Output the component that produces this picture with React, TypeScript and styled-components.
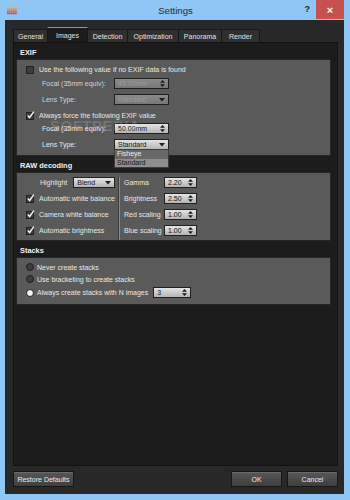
import React from "react";
import styled, { createGlobalStyle } from "styled-components";

const Global = createGlobalStyle`
  html, body { margin: 0; padding: 0; background: #8ec6f5; }
  body { font-family: "Liberation Sans", Arial, sans-serif; }
  * { box-sizing: border-box; }
`;

const Window = styled.div`
  position: relative;
  width: 350px;
  height: 500px;
  background: #8ec6f5;
  display: flex;
  flex-direction: column;
  overflow: hidden;
`;

const TitleBar = styled.div`
  height: 20px;
  display: grid;
  grid-template-columns: 1fr auto 1fr;
  align-items: center;
  padding-left: 7px;
  padding-right: 6px;
`;

const Title = styled.div`
  font-size: 9.6px;
  color: #2a2a2a;
  padding-top: 1px;
`;

const TitleRight = styled.div`
  display: flex;
  justify-content: flex-end;
  align-items: flex-start;
  height: 20px;
  gap: 6px;
`;

const Help = styled.div`
  font-size: 9px;
  font-weight: bold;
  color: #222;
  padding-top: 4px;
`;

const Close = styled.div`
  width: 28px;
  height: 19px;
  background: #c75050;
  color: #fff;
  font-size: 11px;
  font-weight: bold;
  display: flex;
  align-items: center;
  justify-content: center;
`;

const Frame = styled.div`
  flex: 1;
  margin: 0 6px 6px 5px;
  background: #282828;
  padding: 7px 6px 7px 8px;
  display: flex;
  flex-direction: column;
`;

const TabBar = styled.div`
  height: 15px;
  display: flex;
  align-items: flex-end;
`;

const Tab = styled.div<{ $w: number; $active?: boolean }>`
  width: ${(p) => p.$w}px;
  height: ${(p) => (p.$active ? 15 : 13)}px;
  background: ${(p) => (p.$active ? "#1c1c1c" : "#2f2f2f")};
  border: 1px solid #161616;
  border-bottom: none;
  border-top: 1px solid ${(p) => (p.$active ? "#c8921e" : "#1a1a1a")};
  margin-left: -1px;
  color: #e2e2e2;
  font-size: 7px;
  display: flex;
  align-items: center;
  justify-content: center;
  &:first-child { margin-left: 0; }
`;

const Panel = styled.div`
  flex: 1;
  background: #1c1c1c;
  border: 1px solid #121212;
  padding: 3px 6px 0 2px;
  display: flex;
  flex-direction: column;
`;

const SectionTitle = styled.div<{ $first?: boolean }>`
  height: 13px;
  margin-top: ${(p) => (p.$first ? 0 : 3)}px;
  padding-left: 4px;
  display: flex;
  align-items: center;
  color: #f2f2f2;
  font-size: 7.4px;
  font-weight: bold;
`;

const GroupBox = styled.div<{ $pt: number; $pb: number }>`
  background: #5a5a5a;
  border: 1px solid #262626;
  padding: ${(p) => p.$pt}px 0 ${(p) => p.$pb}px 9px;
  display: flex;
  flex-direction: column;
  color: #e8e8e8;
  font-size: 7px;
`;

const Row = styled.div<{ $mt?: number; $h?: number; $indent?: number }>`
  display: flex;
  align-items: center;
  height: ${(p) => p.$h ?? 11}px;
  margin-top: ${(p) => p.$mt ?? 0}px;
  padding-left: ${(p) => p.$indent ?? 0}px;
  gap: 4px;
  white-space: nowrap;
`;

const FormLabel = styled.div<{ $dim?: boolean }>`
  width: 68px;
  color: ${(p) => (p.$dim ? "#d4d4d4" : "#e8e8e8")};
`;

const Field = styled.div<{ $w: number; $disabled?: boolean }>`
  position: relative;
  width: ${(p) => p.$w}px;
  height: 11px;
  border: 1px solid #202020;
  background: ${(p) =>
    p.$disabled
      ? "linear-gradient(#8a8a8a, #777)"
      : "linear-gradient(#e4e4e4, #b4b4b4)"};
  color: ${(p) => (p.$disabled ? "#9c9c9c" : "#141414")};
  font-size: 7px;
  display: flex;
  align-items: center;
  justify-content: space-between;
  padding: 0 3px 0 3px;
  flex-shrink: 0;
`;

const ListPopup = styled.div`
  position: absolute;
  left: -1px;
  top: 100%;
  width: calc(100% + 2px);
  border: 1px solid #3c3c3c;
  background: #8c8c8c;
  z-index: 2;
`;

const ListItem = styled.div<{ $hl?: boolean }>`
  height: 8.5px;
  line-height: 8.5px;
  padding-left: 2px;
  font-size: 7px;
  background: ${(p) => (p.$hl ? "#686868" : "#8e8e8e")};
  color: ${(p) => (p.$hl ? "#ececec" : "#151515")};
`;

const RawGrid = styled.div`
  display: grid;
  grid-template-columns: 93px 1px 1fr;
  grid-template-rows: repeat(4, 11px);
  row-gap: 5px;
  margin-left: -9px;
  padding-left: 9px;
`;

const LeftCell = styled.div<{ $row: number }>`
  grid-column: 1;
  grid-row: ${(p) => p.$row};
  display: flex;
  align-items: center;
  gap: 4px;
  white-space: nowrap;
`;

const HighlightLabel = styled.span`
  margin-left: 14px;
`;

const Separator = styled.div`
  grid-column: 2;
  grid-row: 1 / 5;
  background: #8a8a8a;
  box-shadow: -1px 0 0 #3a3a3a;
  margin-bottom: -4px;
`;

const RightCell = styled.div<{ $row: number }>`
  grid-column: 3;
  grid-row: ${(p) => p.$row};
  display: flex;
  align-items: center;
  padding-left: 4px;
  white-space: nowrap;
`;

const RightLabel = styled.span`
  width: 40px;
`;

const Footer = styled.div`
  margin-top: 5px;
  height: 16px;
  display: flex;
  gap: 5px;
`;

const Button = styled.div<{ $w: number; $push?: boolean }>`
  width: ${(p) => p.$w}px;
  height: 16px;
  margin-left: ${(p) => (p.$push ? "auto" : "0")};
  border: 1px solid #161616;
  background: linear-gradient(#585858, #3e3e3e);
  box-shadow: inset 0 1px 0 #6a6a6a;
  color: #ececec;
  font-size: 7px;
  display: flex;
  align-items: center;
  justify-content: center;
`;

const Watermark = styled.div`
  position: absolute;
  left: 50px;
  top: 117px;
  font-size: 15px;
  font-weight: bold;
  letter-spacing: 0.5px;
  color: rgba(255, 255, 255, 0.16);
  pointer-events: none;
  font-family: "Liberation Sans", Arial, sans-serif;
`;

const SpinArrows = () => (
  <svg width="5" height="7" viewBox="0 0 5 7">
    <path d="M2.5 0 L5 2.8 L0 2.8 Z M0 4.2 L5 4.2 L2.5 7 Z" fill="#1e1e1e" />
  </svg>
);

const DownArrow = () => (
  <svg width="6" height="4" viewBox="0 0 6 4">
    <path d="M0 0 L6 0 L3 3.5 Z" fill="#1e1e1e" />
  </svg>
);

const AppIcon = () => (
  <svg width="10" height="9" viewBox="0 0 10 9">
    {[0, 1, 2, 3].map((r) =>
      [0, 1, 2, 3, 4].map((c) => (
        <rect
          key={`${r}-${c}`}
          x={c * 2}
          y={r * 2 + 0.5}
          width="1.8"
          height="1.8"
          fill={["#f7b13a", "#f08a3a", "#e8603c", "#dc3f4a"][r]}
          opacity={(r + c) % 2 ? 0.85 : 1}
        />
      ))
    )}
  </svg>
);

const CheckBox = ({ checked }: { checked?: boolean }) => (
  <svg width="9" height="9" viewBox="0 0 9 9" style={{ flexShrink: 0 }}>
    <rect x="0.5" y="1.5" width="7" height="7" fill="#3d3d3d" stroke="#222" />
    {checked && (
      <path d="M1.8 4.6 L3.6 6.6 L7.8 0.6" fill="none" stroke="#f4f4f4" strokeWidth="1.5" />
    )}
  </svg>
);

const Radio = ({ checked }: { checked?: boolean }) => (
  <svg width="8" height="8" viewBox="0 0 8 8" style={{ flexShrink: 0, marginRight: -1 }}>
    <circle cx="4" cy="4" r="3.5" fill={checked ? "#f4f4f4" : "#3d3d3d"} stroke="#202020" />
  </svg>
);

const tabs: [string, number][] = [
  ["General", 35],
  ["Images", 41],
  ["Detection", 41],
  ["Optimization", 52],
  ["Panorama", 44],
  ["Render", 39],
];

export default function App() {
  return (
    <>
      <Global />
      <Window>
        <TitleBar>
          <AppIcon />
          <Title>Settings</Title>
          <TitleRight>
            <Help>?</Help>
            <Close>×</Close>
          </TitleRight>
        </TitleBar>
        <Frame>
          <TabBar>
            {tabs.map(([t, w]) => (
              <Tab key={t} $w={w} $active={t === "Images"}>
                {t}
              </Tab>
            ))}
          </TabBar>
          <Panel>
            <SectionTitle $first>EXIF</SectionTitle>
            <GroupBox $pt={4} $pb={5}>
              <Row>
                <CheckBox />
                <span>Use the following value if no EXIF data is found</span>
              </Row>
              <Row $mt={3} $indent={16}>
                <FormLabel $dim>Focal (35mm equiv):</FormLabel>
                <Field $w={55} $disabled>
                  <span>49.00mm</span>
                  <SpinArrows />
                </Field>
              </Row>
              <Row $mt={5} $indent={16}>
                <FormLabel $dim>Lens Type:</FormLabel>
                <Field $w={55} $disabled>
                  <span>Standard</span>
                  <DownArrow />
                </Field>
              </Row>
              <Row $mt={5}>
                <CheckBox checked />
                <span>Always force the following EXIF value</span>
              </Row>
              <Row $mt={2} $indent={16}>
                <FormLabel>Focal (35mm equiv):</FormLabel>
                <Field $w={55}>
                  <span>50.00mm</span>
                  <SpinArrows />
                </Field>
              </Row>
              <Row $mt={5} $indent={16}>
                <FormLabel>Lens Type:</FormLabel>
                <Field $w={55}>
                  <span>Standard</span>
                  <DownArrow />
                  <ListPopup>
                    <ListItem $hl>Fisheye</ListItem>
                    <ListItem>Standard</ListItem>
                  </ListPopup>
                </Field>
              </Row>
            </GroupBox>

            <SectionTitle>RAW decoding</SectionTitle>
            <GroupBox $pt={4} $pb={4}>
              <RawGrid>
                <LeftCell $row={1}>
                  <HighlightLabel>Highlight</HighlightLabel>
                  <Field $w={42} style={{ marginLeft: 2 }}>
                    <span>Blend</span>
                    <DownArrow />
                  </Field>
                </LeftCell>
                <LeftCell $row={2}>
                  <CheckBox checked />
                  <span>Automatic white balance</span>
                </LeftCell>
                <LeftCell $row={3}>
                  <CheckBox checked />
                  <span>Camera white balance</span>
                </LeftCell>
                <LeftCell $row={4}>
                  <CheckBox checked />
                  <span>Automatic brightness</span>
                </LeftCell>
                <Separator />
                {[
                  ["Gamma", "2.20"],
                  ["Brightness", "2.50"],
                  ["Red scaling", "1.00"],
                  ["Blue scaling", "1.00"],
                ].map(([l, v], i) => (
                  <RightCell key={l} $row={i + 1}>
                    <RightLabel>{l}</RightLabel>
                    <Field $w={33}>
                      <span>{v}</span>
                      <SpinArrows />
                    </Field>
                  </RightCell>
                ))}
              </RawGrid>
            </GroupBox>

            <SectionTitle>Stacks</SectionTitle>
            <GroupBox $pt={4} $pb={6}>
              <Row $h={10}>
                <Radio />
                <span>Never create stacks</span>
              </Row>
              <Row $h={10} $mt={2}>
                <Radio />
                <span>Use bracketing to create stacks</span>
              </Row>
              <Row $mt={3}>
                <Radio checked />
                <span>Always create stacks with N images</span>
                <Field $w={38} style={{ marginLeft: 1 }}>
                  <span>3</span>
                  <SpinArrows />
                </Field>
              </Row>
            </GroupBox>
          </Panel>
          <Footer>
            <Button $w={61}>Restore Defaults</Button>
            <Button $w={51} $push>
              OK
            </Button>
            <Button $w={51}>Cancel</Button>
          </Footer>
        </Frame>
        <Watermark>SOFTPEDIA</Watermark>
      </Window>
    </>
  );
}
